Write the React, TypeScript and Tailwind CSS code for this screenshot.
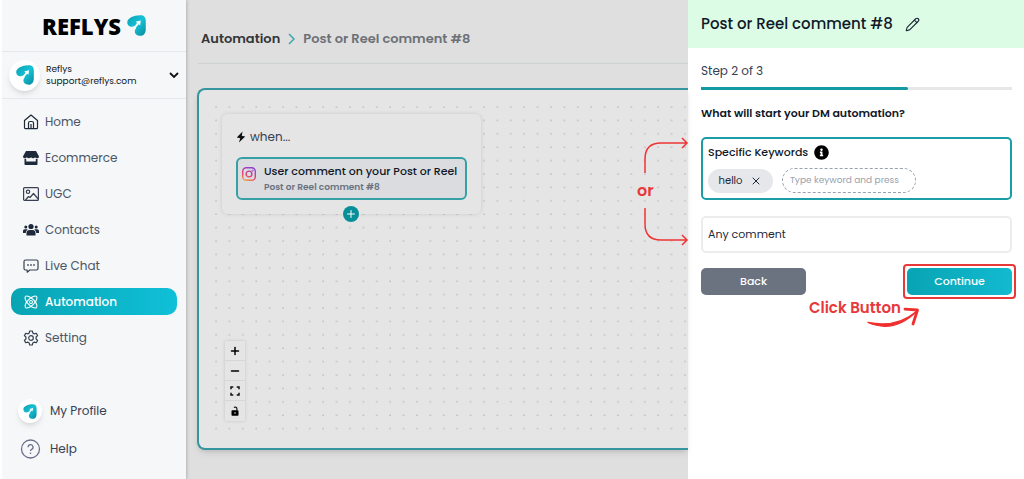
import { useState } from 'react';
import { Minus, Pencil, Plus, X } from 'lucide-react';
import { FaInfoCircle } from 'react-icons/fa';

function BrandMark({ className }: { className: string }) {
  return (
    <svg viewBox="0 0 18 20" className={className} aria-hidden="true">
      <defs>
        <linearGradient id="brand" x1="0" y1="0" x2="1" y2="1">
          <stop offset="0" stopColor="#0a9fb0" />
          <stop offset=".5" stopColor="#16c2d6" />
          <stop offset="1" stopColor="#078a9a" />
        </linearGradient>
      </defs>
      <path
        fill="url(#brand)"
        d="M.2 7C.2 3.200 6 .2 12.500.2c3.700 0 5.300 1.800 5.300 5.300v8c0 4-2.300 6.300-5.200 6.300-3 0-5.200-1.900-5.200-4.200 0-1.300.6-2.300 1.400-3.300L7.500 10.300c-1.200.7-2.500 1-3.800.9C1.600 11 .2 9.300.2 7Z"
      />
      <path fill="#fff" d="m13 5.200-.5 4.600-1.300-1.100-3.500 4-1.200-1L9.600 7.600 8.200 6.500Z" />
    </svg>
  );
}

function HomeIcon() {
  return (
    <svg viewBox="0 0 16 16" className="size-4" fill="none" stroke="#1f2937" strokeWidth="1.200" strokeLinejoin="round">
      <path d="M1.500 6.500 8 1l6.500 5.500v7.200a1 1 0 0 1-1 1h-11a1 1 0 0 1-1-1Z" />
      <path d="M5.500 14.500V9a1.500 1.500 0 0 1 1.500-1.500h2A1.500 1.500 0 0 1 10.500 9v5.500M8 10v4.500" />
    </svg>
  );
}

function StoreIcon() {
  return (
    <svg viewBox="0 0 16 16" className="size-4" fill="#1e293b">
      <path d="M3 1h10l2.800 5c.4 1.500-.6 2.300-1.700 2.300-1 0-1.700-.5-2-1-.4.600-1.100 1-2 1s-1.600-.4-2.100-1c-.5.600-1.200 1-2.100 1s-1.600-.4-2-1c-.4.500-1.100 1-2 1C.8 8.300-.2 7.500.2 6Z" />
      <path d="M1.500 8.900c.6.100 1.200 0 1.700-.2v2.800h9.600V8.700c.5.200 1.100.3 1.700.2v5.200c0 .6-.4 1-1 1h-11c-.6 0-1-.4-1-1Z" />
    </svg>
  );
}

function PictureIcon() {
  return (
    <svg viewBox="0 0 16 16" className="size-4" fill="none" stroke="#374151" strokeWidth="1.200" strokeLinejoin="round">
      <rect x=".6" y="1.600" width="14.800" height="12.800" rx="1" />
      <circle cx="5" cy="5.800" r="1.700" />
      <path d="m2.500 14 3-3.500 1.500 1L10.500 7.500l4.700 5.500" />
    </svg>
  );
}

function ContactsIcon() {
  return (
    <svg viewBox="0 0 16 16" className="size-4" fill="#1e293b">
      <circle cx="8" cy="4.500" r="2.600" />
      <circle cx="2.800" cy="5" r="1.500" />
      <circle cx="13.200" cy="5" r="1.500" />
      <path d="M3.500 13.500v-2.200A3.300 3.300 0 0 1 6.800 8h2.400a3.300 3.300 0 0 1 3.300 3.300v2.200Z" />
      <path d="M0 11V9.200C0 8 .8 7.300 1.900 7.300h1.800c.4 0 .7.100 1 .3A4.500 4.500 0 0 0 2.700 11ZM16 11V9.200c0-1.200-.8-1.900-1.900-1.900h-1.800c-.4 0-.7.100-1 .3a4.500 4.500 0 0 1 2 3.400Z" />
    </svg>
  );
}

function ChatIcon() {
  return (
    <svg viewBox="0 0 16 16" className="size-4" fill="none" stroke="#374151" strokeWidth="1.200" strokeLinejoin="round">
      <path d="M2.500 2h11A1.500 1.500 0 0 1 15 3.500v7a1.500 1.500 0 0 1-1.500 1.500H6.800l-2.600 2.200V12H2.500A1.500 1.500 0 0 1 1 10.500v-7A1.500 1.500 0 0 1 2.500 2Z" />
      <path d="M4.200 7h1.600M7.200 7h1.600M10.200 7h1.600" strokeWidth="1.700" />
    </svg>
  );
}

function AutomationIcon() {
  return (
    <svg viewBox="0 0 16 16" className="size-4" fill="none" stroke="#fff" strokeWidth="1.100">
      <ellipse cx="8" cy="8" rx="7.800" ry="3.300" transform="rotate(45 8 8)" />
      <ellipse cx="8" cy="8" rx="7.800" ry="3.300" transform="rotate(-45 8 8)" />
      <circle cx="8" cy="8" r="1.500" />
    </svg>
  );
}

function GearIcon() {
  return (
    <svg viewBox="0 0 16 16" className="size-4" fill="none" stroke="#374151" strokeWidth="1.200" strokeLinejoin="round">
      <path d="M6.700 1h2.600l.5 2 1.500.9 2-.6 1.300 2.300L13.100 7v2l1.500 1.400-1.300 2.300-2-.6-1.500.9-.5 2H6.700l-.5-2-1.500-.9-2 .6-1.300-2.300L2.900 9V7L1.400 5.600l1.300-2.300 2 .6L6.200 3Z" />
      <circle cx="8" cy="8" r="2.300" />
    </svg>
  );
}

function InstagramIcon() {
  return (
    <svg viewBox="0 0 14 14" className="mt-1 size-[14px] shrink-0" fill="none" stroke="url(#insta)" strokeWidth="1.400">
      <defs>
        <linearGradient id="insta" gradientUnits="userSpaceOnUse" x1="3" y1="14" x2="9" y2="0">
          <stop offset="0" stopColor="#f5a742" />
          <stop offset=".4" stopColor="#e43f6f" />
          <stop offset="1" stopColor="#8b3fd9" />
        </linearGradient>
      </defs>
      <rect x=".7" y=".7" width="12.600" height="12.600" rx="3.600" />
      <circle cx="7" cy="7" r="2.900" />
      <circle cx="10.600" cy="3.400" r=".3" />
    </svg>
  );
}

function FitIcon() {
  return (
    <svg viewBox="0 0 10 10" className="size-[10px]" fill="none" stroke="#111" strokeWidth="1.500">
      <path d="M1 3.300V1h2.300M6.700 1H9v2.300M9 6.700V9H6.700M3.300 9H1V6.700" />
    </svg>
  );
}

function UnlockIcon() {
  return (
    <svg viewBox="0 0 10 10" className="size-[10px]" fill="none">
      <rect x="1.500" y="4.300" width="7" height="5.400" rx=".8" fill="#000" />
      <path d="M6.900 4.500V2.800A1.700 1.700 0 0 0 4 1.500" stroke="#000" strokeWidth="1.100" />
      <circle cx="5" cy="7" r=".8" fill="#ddd" />
    </svg>
  );
}

const NAV = [
  { label: 'Home', icon: <HomeIcon /> },
  { label: 'Ecommerce', icon: <StoreIcon /> },
  { label: 'UGC', icon: <PictureIcon /> },
  { label: 'Contacts', icon: <ContactsIcon /> },
  { label: 'Live Chat', icon: <ChatIcon /> },
  { label: 'Automation', icon: <AutomationIcon />, active: true },
  { label: 'Setting', icon: <GearIcon /> },
];

function Sidebar() {
  return (
    <aside className="z-10 flex w-[186px] shrink-0 flex-col border-l-2 border-white bg-[#f5f7f9] shadow-[1px_0_3px_rgba(0,0,0,0.2)]">
      <div className="flex h-[51px] items-center justify-center gap-[6px]">
        <span className="font-['Open_Sans',sans-serif] text-[22px] leading-6 font-extrabold text-black">REFLYS</span>
        <BrandMark className="h-[21px] w-[19px]" />
      </div>
      <button type="button" className="flex h-12 items-center border-y border-[#e6e8eb] px-[7px] text-left">
        <span className="flex size-[31px] shrink-0 items-center justify-center rounded-full bg-white shadow-md">
          <BrandMark className="h-[20px] w-[18px]" />
        </span>
        <span className="ml-[6px] flex flex-1 flex-col text-[9px] leading-3 text-gray-900">
          <span>Reflys</span>
          <span>support@reflys.com</span>
        </span>
        <svg viewBox="0 0 10 6" className="h-[6px] w-[10px]" fill="none" stroke="#111" strokeWidth="1.800">
          <path d="m1 1 4 4 4-4" />
        </svg>
      </button>
      <nav className="mt-[9px] flex flex-col gap-[9px] px-[9px]">
        {NAV.map((item) => (
          <a
            key={item.label}
            href="#"
            className={`flex h-[27px] items-center gap-[6px] rounded-[10px] pl-3 text-[12px] ${
              item.active ? 'bg-linear-to-r from-[#08a4b3] to-[#0fc0d8] font-medium text-white' : 'text-gray-600'
            }`}
          >
            {item.icon}
            {item.label}
          </a>
        ))}
      </nav>
      <div className="mt-auto flex flex-col gap-[14px] pb-[18px] pl-4 text-[12px] text-gray-700">
        <a href="#" className="flex h-6 items-center gap-2">
          <span className="flex size-6 items-center justify-center rounded-full bg-white shadow-md">
            <BrandMark className="h-[15px] w-[14px]" />
          </span>
          My Profile
        </a>
        <a href="#" className="flex h-6 items-center gap-2">
          <svg viewBox="0 0 24 24" className="size-6" fill="none" stroke="#6b6f8c" strokeWidth="1.300">
            <circle cx="12.500" cy="12" r="9" />
            <path d="M10 10.200a2.500 2.500 0 1 1 3.700 2.200c-.8.400-1.200.8-1.200 1.700M12.500 15.500v1.400" />
          </svg>
          Help
        </a>
      </div>
    </aside>
  );
}

function TriggerNode() {
  return (
    <div className="absolute top-[24px] left-[23px] w-[259px] rounded-md bg-[#e5e5e5] p-[14px] shadow-[0_0_4px_rgba(0,0,0,0.12)]">
      <p className="flex h-[18px] items-center gap-1 text-[12px] text-gray-700">
        <svg viewBox="0 0 10 12" className="h-3 w-[10px]" fill="#111">
          <path d="M6.500.5.8 6.400l3.400.9L3 11.600l6.200-6L5.800 4.700Z" />
        </svg>
        when...
      </p>
      <div className="mt-[11px] flex h-[43px] gap-2 rounded-md border-2 border-[#36a1a4] bg-[#dadcdf] px-1 pt-1">
        <InstagramIcon />
        <div className="whitespace-nowrap">
          <p className="text-[11px] leading-[17px] font-medium text-gray-900">User comment on your Post or Reel</p>
          <p className="text-[9px] leading-[14px] font-semibold text-gray-500">Post or Reel comment #8</p>
        </div>
      </div>
      <button
        type="button"
        aria-label="Add step"
        className="absolute -bottom-2 left-[121px] flex size-4 items-center justify-center rounded-full bg-[#078f99] text-white"
      >
        <Plus className="size-3" />
      </button>
    </div>
  );
}

function Canvas() {
  const controls = [
    { label: 'Zoom in', icon: <Plus className="size-3" strokeWidth={3} /> },
    { label: 'Zoom out', icon: <Minus className="size-3" strokeWidth={3} /> },
    { label: 'Fit view', icon: <FitIcon /> },
    { label: 'Toggle lock', icon: <UnlockIcon /> },
  ];

  return (
    <section className="relative mb-[29px] ml-[11px] flex-1 rounded-l-lg border-2 border-r-0 border-[#36969d] bg-[#e5e5e5] p-[14px] pr-0 shadow-md">
      <svg className="size-full" aria-hidden="true">
        <defs>
          <pattern id="dots" width="13.4" height="13.4" patternUnits="userSpaceOnUse">
            <circle cx="3" cy="3" r=".8" fill="#b9bbbd" />
          </pattern>
        </defs>
        <rect width="100%" height="100%" fill="url(#dots)" />
      </svg>
      <TriggerNode />
      <div className="absolute bottom-[27px] left-[26px] flex w-5 flex-col divide-y divide-[#d6d6d6] bg-[#e5e5e5] shadow-[0_0_3px_rgba(0,0,0,0.15)]">
        {controls.map((c) => (
          <button key={c.label} type="button" aria-label={c.label} className="flex h-5 items-center justify-center text-black">
            {c.icon}
          </button>
        ))}
      </div>
    </section>
  );
}

function Drawer() {
  const [keyword, setKeyword] = useState('');

  return (
    <aside className="w-[336px] shrink-0 bg-white">
      <header className="flex h-12 items-center gap-3 bg-[#dcfce5] px-[13px]">
        <h2 className="text-[15px] font-medium text-gray-900">Post or Reel comment #8</h2>
        <button type="button" aria-label="Rename">
          <Pencil className="size-[15px] text-gray-800" strokeWidth={1.8} />
        </button>
      </header>
      <div className="pr-3 pl-[13px]">
        <p className="mt-[14px] text-[12px] leading-[18px] text-gray-700">Step 2 of 3</p>
        <div className="mt-[7px] h-[3px] bg-[#e6e7e8]">
          <div className="h-full w-2/3 rounded-r-full bg-[#1299a1]" />
        </div>
        <h3 className="mt-[14px] text-[11px] leading-[18px] font-semibold text-gray-900">What will start your DM automation?</h3>

        <div className="relative mt-[15px] flex flex-col gap-4">
          <div className="rounded-[5px] border-2 border-[#1a9da5] p-[5px]">
            <div className="flex h-4 items-center gap-[6px]">
              <label htmlFor="keyword" className="text-[11px] font-medium text-gray-900">
                Specific Keywords
              </label>
              <FaInfoCircle className="size-[15px] text-black" />
            </div>
            <div className="mt-2 flex items-center gap-[9px]">
              <span className="flex h-6 w-[65px] items-center justify-center gap-2 rounded-full bg-[#e5e7eb] text-[10px] text-gray-800">
                hello
                <button type="button" aria-label="Remove hello">
                  <X className="size-3" />
                </button>
              </span>
              <input
                id="keyword"
                value={keyword}
                onChange={(e) => setKeyword(e.target.value)}
                placeholder="Type keyword and press"
                className="h-[25px] w-[134px] rounded-full border border-dashed border-gray-400 px-[7px] text-[9px] placeholder:text-gray-400"
              />
            </div>
          </div>
          <button type="button" className="h-[37px] rounded-[5px] border-2 border-[#ebecee] px-[5px] text-left text-[11px] text-gray-800">
            Any comment
          </button>
          <svg viewBox="0 0 52 116" className="absolute top-0 -left-[64px] h-[116px] w-[52px]" fill="none" stroke="#ef3535" strokeWidth="1.500">
            <path d="M8 36V22Q8 6 24 6h26M45 1l5 5-5 5" />
            <path d="M8 71v16q0 16 16 16h26M45 98l5 5-5 5" />
          </svg>
          <span className="absolute top-[44px] -left-[64px] text-[16px] leading-5 font-semibold text-[#e8393a]">or</span>
        </div>

        <div className="relative mt-[15px] flex justify-between text-[11px] font-medium text-white">
          <button type="button" className="h-[27px] w-[105px] rounded-[5px] bg-[#6b7280]">
            Back
          </button>
          <div className="-m-1 rounded border-2 border-[#e8393a] p-[2px]">
            <button type="button" className="h-[27px] w-[105px] rounded-[5px] bg-linear-to-r from-[#08a4b3] to-[#12bad0]">
              Continue
            </button>
          </div>
          <span className="absolute top-[31px] left-[108px] text-[15px] leading-[18px] font-semibold whitespace-nowrap text-[#e8393a]">
            Click Button
          </span>
          <svg viewBox="0 0 54 22" className="absolute top-[39px] right-[92px] h-[22px] w-[54px]" fill="none" stroke="#f02f2f" strokeLinecap="round" strokeLinejoin="round">
            <path d="M2 15.500C17 22 34 21 51 4 36 17 19 19 2 15.500Z" fill="#f02f2f" strokeWidth="1.300" />
            <path d="M39 2.200 51.500 3 47 17" strokeWidth="2.800" />
          </svg>
        </div>
      </div>
    </aside>
  );
}

export default function App() {
  return (
    <div className="flex min-h-screen bg-[#dfdfdf] font-['Poppins','Inter',sans-serif]">
      <Sidebar />
      <main className="flex min-w-0 flex-1 flex-col">
        <div className="mb-6 ml-3 flex h-16 items-center gap-2 border-b border-[#cdd2d4] pt-[14px] pl-[3px] text-[13px] font-semibold whitespace-nowrap">
          <a href="#" className="text-[#333638]">
            Automation
          </a>
          <svg viewBox="0 0 7 12" className="h-3 w-[7px]" fill="none" stroke="#3aa6ad" strokeWidth="1.500">
            <path d="m1 1 5 5-5 5" />
          </svg>
          <h1 className="text-[#6d7177]">Post or Reel comment #8</h1>
        </div>
        <Canvas />
      </main>
      <Drawer />
    </div>
  );
}
